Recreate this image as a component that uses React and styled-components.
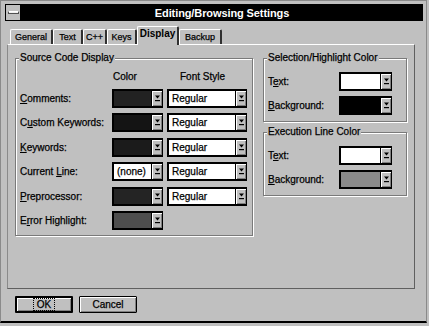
import React from "react";
import styled, { createGlobalStyle } from "styled-components";

const Global = createGlobalStyle`
  html, body { margin: 0; padding: 0; background: #c0c0c0; }
  body {
    font-family: "Liberation Sans", Arial, sans-serif;
    font-size: 10px;
    color: #000;
    -webkit-text-stroke: 0.25px #000;
  }
  * { box-sizing: border-box; }
`;

const Window = styled.div`
  width: 427px;
  height: 323px;
  background: #c0c0c0;
  border-top: 1px solid #8a8a8a;
  border-left: 1px solid #8a8a8a;
  border-right: 1px solid #8a8a8a;
  border-bottom: 2px solid #000;
  padding: 3px 3px 0 4px;
  display: flex;
  flex-direction: column;
`;

const TitleBar = styled.div`
  display: flex;
  height: 17px;
`;

const SysBox = styled.div`
  width: 16px;
  height: 17px;
  background: #c0c0c0;
  border: 1px solid #000;
  display: flex;
  align-items: center;
  justify-content: center;
`;

const SysBar = styled.span`
  width: 11px;
  height: 3px;
  background: #f0f0f0;
  border: 1px solid #505050;
  border-top-color: #fff;
`;

const Caption = styled.div`
  flex: 1;
  background: #000;
  color: #fff;
  -webkit-text-stroke: 0;
  font-weight: bold;
  font-size: 11px;
  display: flex;
  align-items: center;
  justify-content: center;
  letter-spacing: -0.1px;
`;

const TabRow = styled.div`
  display: flex;
  align-items: flex-end;
  height: 18px;
  margin-top: 5px;
  padding-left: 5px;
`;

const Tab = styled.div`
  position: relative;
  z-index: ${(p) => (p.$active ? 1 : 0)};
  width: ${(p) => p.$w}px;
  height: ${(p) => (p.$active ? 19 : 15)}px;
  margin-bottom: ${(p) => (p.$active ? -1 : 0)}px;
  background: #c0c0c0;
  border-top: 1px solid #fff;
  border-left: 1px solid #fff;
  border-right: 2px solid #303030;
  border-radius: 2px 2px 0 0;
  text-align: center;
  line-height: ${(p) => (p.$active ? 14 : 14)}px;
  font-size: ${(p) => (p.$active ? 10 : 9)}px;
  font-weight: ${(p) => (p.$active ? "bold" : "normal")};
  -webkit-text-stroke: ${(p) => (p.$active ? 0 : 0.25)}px;
  white-space: nowrap;
`;

const Panel = styled.div`
  margin-left: 2px;
  width: 408px;
  height: 245px;
  border-top: 1px solid #fff;
  border-left: 1px solid #8a8a8a;
  border-right: 1px solid #606060;
  border-bottom: 1px solid #606060;
  padding: 13px 0 0 7px;
  display: flex;
  gap: 10px;
  align-items: flex-start;
`;

const Group = styled.div`
  position: relative;
  width: ${(p) => p.$w}px;
  height: ${(p) => p.$h}px;
  border: 1px solid #7a7a7a;
  box-shadow: 1px 1px 0 #fff, inset 1px 1px 0 #fff;
`;

const Legend = styled.span`
  position: absolute;
  top: -7px;
  left: 3px;
  padding: 0 1px;
  line-height: 12px;
  background: #c0c0c0;
  white-space: nowrap;
`;

const RightColumn = styled.div`
  display: flex;
  flex-direction: column;
  gap: 10px;
`;

const SourceGrid = styled.div`
  display: grid;
  grid-template-columns: 88px 51px 80px;
  grid-template-rows: 12px repeat(6, 19px);
  column-gap: 4px;
  row-gap: 5.5px;
  padding: 12px 0 0 4px;
`;

const ColorGrid = styled.div`
  display: grid;
  grid-template-columns: 71px 53px;
  grid-template-rows: repeat(2, 19px);
  row-gap: 5px;
  padding: 13px 0 0 4px;
`;

const Head = styled.div`
  line-height: 12px;
  padding-left: ${(p) => p.$pad}px;
  white-space: nowrap;
`;

const Label = styled.div`
  line-height: 19px;
  white-space: nowrap;
`;

const Combo = styled.div`
  display: flex;
  height: 19px;
  border: 2px solid #000;
  border-right-width: 1px;
  background: #fff;
`;

const Field = styled.div`
  flex: 1;
  background: ${(p) => p.$color || "#fff"};
  border: ${(p) => (p.$color ? "0" : "1px solid #fff")};
  line-height: 13px;
  padding-left: 2px;
  white-space: nowrap;
  overflow: hidden;
  font-size: 10px;
`;

const DropButton = styled.div`
  width: 11px;
  background: #c0c0c0;
  border-left: 1px solid #000;
  box-shadow: inset 1px 1px 0 #fff, inset -1px -1px 0 #808080;
  display: flex;
  align-items: center;
  justify-content: center;
`;

const ButtonRow = styled.div`
  display: flex;
  gap: 6px;
  margin-top: 7px;
  padding-left: 10px;
`;

const Button = styled.button`
  width: 58px;
  height: 17px;
  padding: 0;
  font-family: "Liberation Sans", Arial, sans-serif;
  font-size: 10px;
  color: #000;
  -webkit-text-stroke: 0.25px #000;
  background: #c0c0c0;
  border: ${(p) => (p.$default ? 2 : 1)}px solid #000;
  border-radius: 1px;
  box-shadow: inset 1px 1px 0 #fff, inset -1px -1px 0 #808080;
  display: flex;
  align-items: center;
  justify-content: center;
`;

const Focus = styled.span`
  outline: 1px dotted #000;
  padding: 0 3px;
  line-height: 11px;
`;

const Arrow = () => (
  <svg width="5" height="7" viewBox="0 0 5 7">
    <polygon points="0,0.5 5,0.5 2.5,3.5" fill="#000" />
    <rect x="0" y="5" width="5" height="1.2" fill="#000" />
  </svg>
);

const ColorBox = ({ color, text }) => (
  <Combo>
    <Field $color={color}>{text}</Field>
    <DropButton>
      <Arrow />
    </DropButton>
  </Combo>
);

const FontBox = ({ value }) => (
  <Combo>
    <Field>{value}</Field>
    <DropButton>
      <Arrow />
    </DropButton>
  </Combo>
);

const rows = [
  { label: <><u>C</u>omments:</>, color: "#222", font: "Regular" },
  { label: <>C<u>u</u>stom Keywords:</>, color: "#141414", font: "Regular" },
  { label: <><u>K</u>eywords:</>, color: "#1b1b1b", font: "Regular" },
  { label: <>Current <u>L</u>ine:</>, color: null, text: "(none)", font: "Regular" },
  { label: <><u>P</u>reprocessor:</>, color: "#242424", font: "Regular" },
  { label: <>E<u>r</u>ror Highlight:</>, color: "#4e4e4e" },
];

const tabs = [
  { name: "General", w: 43 },
  { name: "Text", w: 30 },
  { name: "C++", w: 24 },
  { name: "Keys", w: 30 },
  { name: "Display", w: 42, active: true },
  { name: "Backup", w: 43 },
];

const ColorPair = ({ textColor, bgColor }) => (
  <ColorGrid>
    <Label>T<u>e</u>xt:</Label>
    <ColorBox color={textColor} />
    <Label><u>B</u>ackground:</Label>
    <ColorBox color={bgColor} />
  </ColorGrid>
);

export default function App() {
  return (
    <>
      <Global />
      <Window>
        <TitleBar>
          <SysBox>
            <SysBar />
          </SysBox>
          <Caption>Editing/Browsing Settings</Caption>
        </TitleBar>
        <TabRow>
          {tabs.map((t) => (
            <Tab key={t.name} $w={t.w} $active={t.active}>
              {t.name}
            </Tab>
          ))}
        </TabRow>
        <Panel>
          <Group $w={238} $h={178}>
            <Legend>Source Code Display</Legend>
            <SourceGrid>
              <span />
              <Head $pad={1}>Color</Head>
              <Head $pad={13}>Font Style</Head>
              {rows.map((r, i) => (
                <React.Fragment key={i}>
                  <Label>{r.label}</Label>
                  <ColorBox color={r.color} text={r.text} />
                  {r.font ? <FontBox value={r.font} /> : <span />}
                </React.Fragment>
              ))}
            </SourceGrid>
          </Group>
          <RightColumn>
            <Group $w={144} $h={64}>
              <Legend>Selection/Highlight Color</Legend>
              <ColorPair textColor="#fff" bgColor="#000" />
            </Group>
            <Group $w={144} $h={64}>
              <Legend>Execution Line Color</Legend>
              <ColorPair textColor="#fff" bgColor="#8a8a8a" />
            </Group>
          </RightColumn>
        </Panel>
        <ButtonRow>
          <Button $default>
            <Focus>OK</Focus>
          </Button>
          <Button>Cancel</Button>
        </ButtonRow>
      </Window>
    </>
  );
}
